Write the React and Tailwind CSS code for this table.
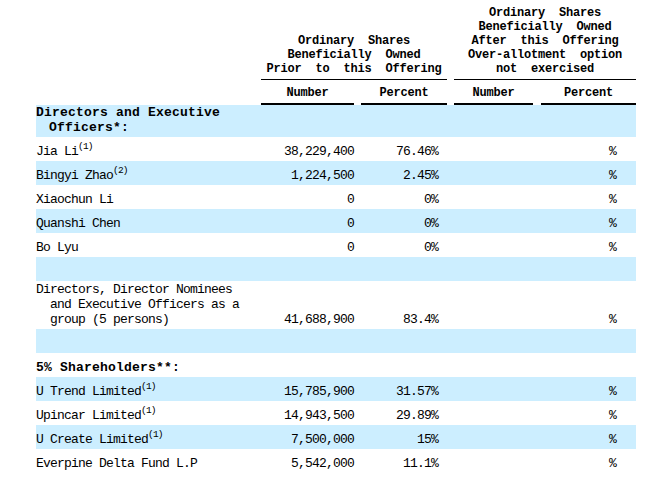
import React from "react";

const COLS = "grid grid-cols-[225px_93px_7px_86px_7px_79px_8px_95px]";

function Sup({ n }) {
  return <sup className="text-[9.5px] -top-[0.65em]">({n})</sup>;
}

function Row({ blue, tall, children, num, pct, last }) {
  return (
    <div
      className={`${COLS} items-end pb-[2px] ${blue ? "bg-[#cceeff]" : "bg-white"} ${
        tall ? "" : "h-[24px]"
      }`}
    >
      <div>{children}</div>
      <div className="text-right pr-[0px]">{num}</div>
      <div />
      <div className="text-right pr-[9px]">{pct}</div>
      <div />
      <div />
      <div />
      <div className="text-right pr-[20px]">{last}</div>
    </div>
  );
}

export default function App() {
  return (
    <div className="bg-white w-[666px] h-[483px] pt-[6px] pl-[36px] text-black font-['Liberation_Mono','DejaVu_Sans_Mono',monospace] text-[13px] tracking-[-0.8px] leading-[15px]">
      <div className="w-[600px]">
        {/* header row 1 */}
        <div className={`${COLS} items-end font-bold text-[12px] tracking-[-0.2px] leading-[14px]`}>
          <div />
          <div className="col-span-3 border-b border-black pb-[3px] text-center whitespace-pre">
            {"Ordinary  Shares\nBeneficially  Owned\nPrior  to  this  Offering"}
          </div>
          <div />
          <div className="col-span-3 border-b border-black pb-[3px] text-center whitespace-pre">
            {"Ordinary  Shares\nBeneficially  Owned\nAfter  this  Offering\nOver-allotment  option\nnot  exercised"}
          </div>
        </div>
        {/* header row 2 */}
        <div className={`${COLS} items-end font-bold text-[12px] tracking-[-0.2px] leading-[14px]`}>
          <div />
          <div className="border-b-2 border-black pt-[6px] pb-[3px] text-center">Number</div>
          <div />
          <div className="border-b-2 border-black pt-[6px] pb-[3px] text-center">Percent</div>
          <div />
          <div className="border-b-2 border-black pt-[6px] pb-[3px] text-center">Number</div>
          <div />
          <div className="border-b-2 border-black pt-[6px] pb-[3px] text-center">Percent</div>
        </div>

        <Row blue tall>
          <div className="font-bold tracking-[0.2px]">
            <div>Directors and Executive</div>
            <div className="pl-[13px]">Officers*:</div>
          </div>
        </Row>
        <Row num="38,229,400" pct="76.46%" last="%">
          Jia Li<Sup n={1} />
        </Row>
        <Row blue num="1,224,500" pct="2.45%" last="%">
          Bingyi Zhao<Sup n={2} />
        </Row>
        <Row num="0" pct="0%" last="%">
          Xiaochun Li
        </Row>
        <Row blue num="0" pct="0%" last="%">
          Quanshi Chen
        </Row>
        <Row num="0" pct="0%" last="%">
          Bo Lyu
        </Row>
        <Row blue>{""}</Row>
        <Row tall num="41,688,900" pct="83.4%" last="%">
          <div className="pt-[1px]">
            <div>Directors, Director Nominees</div>
            <div className="pl-[14px]">and Executive Officers as a</div>
            <div className="pl-[14px]">group (5 persons)</div>
          </div>
        </Row>
        <Row blue>{""}</Row>
        <Row>
          <span className="font-bold tracking-[0.2px]">5% Shareholders**:</span>
        </Row>
        <Row blue num="15,785,900" pct="31.57%" last="%">
          U Trend Limited<Sup n={1} />
        </Row>
        <Row num="14,943,500" pct="29.89%" last="%">
          Upincar Limited<Sup n={1} />
        </Row>
        <Row blue num="7,500,000" pct="15%" last="%">
          U Create Limited<Sup n={1} />
        </Row>
        <Row num="5,542,000" pct="11.1%" last="%">
          Everpine Delta Fund L.P
        </Row>
      </div>
    </div>
  );
}
